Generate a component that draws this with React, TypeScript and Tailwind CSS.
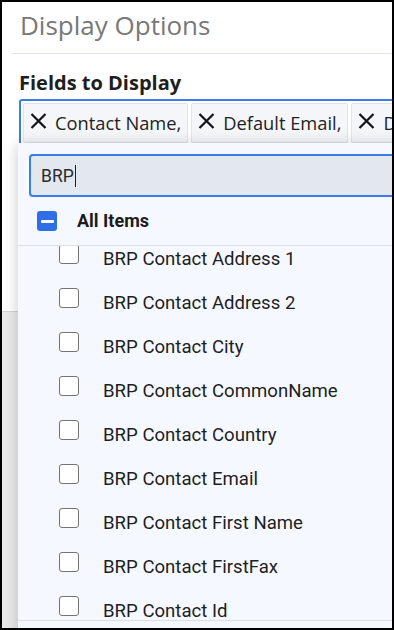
import React from "react";

const items = [
  "BRP Contact Address 1",
  "BRP Contact Address 2",
  "BRP Contact City",
  "BRP Contact CommonName",
  "BRP Contact Country",
  "BRP Contact Email",
  "BRP Contact First Name",
  "BRP Contact FirstFax",
  "BRP Contact Id",
];

const tags = ["Contact Name,", "Default Email,", "Default Phone,"];

function XIcon() {
  return (
    <svg width="17" height="16" viewBox="0 0 17 16" className="shrink-0 -translate-y-[2px]">
      <path d="M1.5 1 L15.5 15 M15.5 1 L1.5 15" stroke="#141414" strokeWidth="2.2" fill="none" />
    </svg>
  );
}

export default function App() {
  return (
    <div className="w-[394px] h-[630px] border-2 border-black bg-white overflow-hidden relative">
      <div className="w-[700px] h-full flex flex-col">
        <div className="ml-[10px] h-[52px] border-b border-[#e2e2f0] pl-[8px] pt-[6px]">
          <div className="font-['Open_Sans',sans-serif] text-[26px] leading-[34px] text-[#787878]">
            Display Options
          </div>
        </div>
        <div className="ml-[17px] mt-[15px] font-['Open_Sans',sans-serif] font-bold text-[20px] leading-[28px] text-[#1e1e1e]">
          Fields to Display
        </div>
        <div className="ml-[17px] mt-[2px] border-2 border-[#3b7de8] rounded-[3px] p-[2px] flex bg-white">
          {tags.map((t) => (
            <div
              key={t}
              className="h-[40px] mr-[3px] flex items-center gap-[8px] pl-[6px] pr-[6px] bg-[#f4f6fa] border border-[#e0e4ea] rounded-[2px]"
            >
              <XIcon />
              <span className="font-['Open_Sans',sans-serif] text-[18.3px] leading-[24px] text-[#222] whitespace-nowrap">
                {t}
              </span>
            </div>
          ))}
        </div>
        <div className="mt-[164px] flex-1 border-t border-[#d4d4d4] bg-[#ebebeb]" />
      </div>

      <div className="absolute left-[16px] top-[141px] w-[500px] h-[520px] bg-[#f5f9ff] shadow-[0_2px_14px_rgba(0,0,0,0.22)]">
        <div className="pt-[11px] pl-[11px]">
          <div className="h-[43px] w-[520px] border-2 border-[#3b7de8] rounded-[4px] bg-[#e3e8ee] flex items-center pl-[10px]">
            <span className="font-['Roboto',sans-serif] text-[17.5px] leading-[22px] text-[#2a2a2a]">BRP</span>
            <span className="inline-block w-px h-[22px] bg-[#222] ml-[1px]" />
          </div>
        </div>
        <div className="h-[49px] border-b border-[#dcdfe5] flex items-center pl-[19px] gap-[20px]">
          <div className="w-[20px] h-[20px] rounded-[3px] bg-[#2e6fe8] flex items-center justify-center">
            <div className="w-[13px] h-[3px] bg-white rounded-[1px]" />
          </div>
          <span className="font-['Roboto',sans-serif] font-bold text-[18px] leading-[22px] text-[#1c1c1c]">
            All Items
          </span>
        </div>
        <div className="h-[375px] border-b border-[#dcdfe5] overflow-hidden">
          <div className="-mt-[12px]">
            {items.map((it) => (
              <div key={it} className="h-[44px] flex items-start pt-[10px] pl-[41px] gap-[24px]">
                <div className="w-[20px] h-[20px] rounded-[3px] border border-[#727272] bg-white shrink-0" />
                <span className="font-['Roboto',sans-serif] text-[18.6px] leading-[31px] text-[#1e1e1e] whitespace-nowrap">
                  {it}
                </span>
              </div>
            ))}
          </div>
        </div>
      </div>
    </div>
  );
}
